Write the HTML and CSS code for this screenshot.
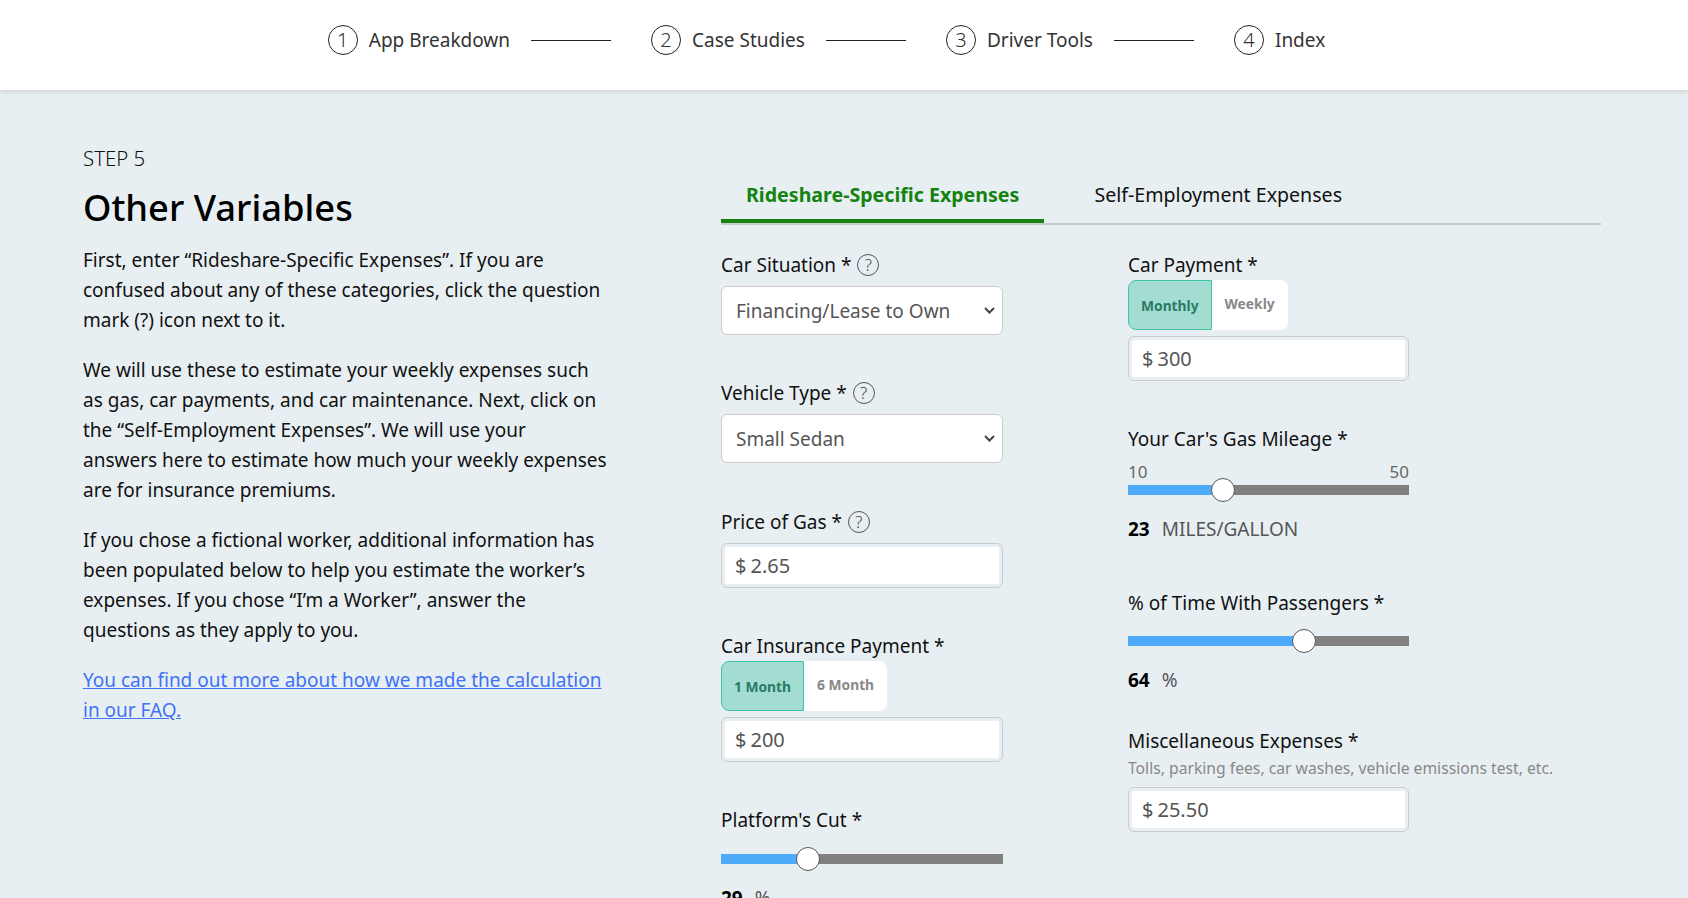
FILE: index.html
```html
<!DOCTYPE html>
<html lang="en">
<head>
    <meta charset="UTF-8">
    <meta name="viewport" content="width=device-width, initial-scale=1.0">
    <title>Other Variables</title>
    <link rel="stylesheet" href="styles.css">
</head>
<body>

    <nav class="steps">
        <div class="step"><span class="step-num">1</span><span class="step-label">App Breakdown</span></div>
        <span class="step-line"></span>
        <div class="step"><span class="step-num">2</span><span class="step-label">Case Studies</span></div>
        <span class="step-line"></span>
        <div class="step"><span class="step-num">3</span><span class="step-label">Driver Tools</span></div>
        <span class="step-line"></span>
        <div class="step"><span class="step-num">4</span><span class="step-label">Index</span></div>
    </nav>

    <main class="page">
        <section class="intro">
            <div class="eyebrow">STEP 5</div>
            <h1>Other Variables</h1>
            <p>First, enter “Rideshare-Specific Expenses”. If you are confused about any of these categories, click the question mark (?) icon next to it.</p>
            <p>We will use these to estimate your weekly expenses such as gas, car payments, and car maintenance. Next, click on the “Self-Employment Expenses”. We will use your<br>answers here to estimate how much your weekly expenses are for insurance premiums.</p>
            <p>If you chose a fictional worker, additional information has been populated below to help you estimate the worker’s expenses. If you chose “I’m a Worker”, answer the questions as they apply to you.</p>
            <p><a href="#">You can find out more about how we made the calculation in our FAQ.</a></p>
        </section>

        <section class="calc">
            <div class="tabs">
                <div class="tab active">Rideshare-Specific Expenses</div>
                <div class="tab">Self-Employment Expenses</div>
            </div>

            <div class="form-cols">
                <div class="form-col">
                    <div class="field field-snug">
                        <label>Car Situation * <span class="help">?</span></label>
                        <select><option>Financing/Lease to Own</option></select>
                    </div>
                    <div class="field">
                        <label>Vehicle Type * <span class="help">?</span></label>
                        <select><option>Small Sedan</option></select>
                    </div>
                    <div class="field field-snug">
                        <label>Price of Gas * <span class="help">?</span></label>
                        <div class="money"><span>$</span><span>2.65</span></div>
                    </div>
                    <div class="field field-snug">
                        <label>Car Insurance Payment *</label>
                        <div class="toggle">
                            <button class="on">1 Month</button>
                            <button>6 Month</button>
                        </div>
                        <div class="money"><span>$</span><span>200</span></div>
                    </div>
                    <div class="field">
                        <label>Platform's Cut *</label>
                        <div class="slider"><div class="slider-fill" style="width: 30.9%"><span class="thumb"></span></div></div>
                        <div class="slider-value"><b>29</b><span>%</span></div>
                    </div>
                </div>

                <div class="form-col">
                    <div class="field field-snug">
                        <label>Car Payment *</label>
                        <div class="toggle">
                            <button class="on">Monthly</button>
                            <button>Weekly</button>
                        </div>
                        <div class="money"><span>$</span><span>300</span></div>
                    </div>
                    <div class="field">
                        <label>Your Car's Gas Mileage *</label>
                        <div class="range-ends"><span>10</span><span>50</span></div>
                        <div class="slider slider-ranged"><div class="slider-fill" style="width: 33.8%"><span class="thumb"></span></div></div>
                        <div class="slider-value"><b>23</b><span>MILES/GALLON</span></div>
                    </div>
                    <div class="field field-tight">
                        <label>% of Time With Passengers *</label>
                        <div class="slider"><div class="slider-fill" style="width: 62.6%"><span class="thumb"></span></div></div>
                        <div class="slider-value"><b>64</b><span>%</span></div>
                    </div>
                    <div class="field">
                        <label>Miscellaneous Expenses *</label>
                        <div class="hint">Tolls, parking fees, car washes, vehicle emissions test, etc.</div>
                        <div class="money"><span>$</span><span>25.50</span></div>
                    </div>
                </div>
            </div>
        </section>
    </main>

</body>
</html>
```

FILE: styles.css
```css
html, body {
    height: 100%;
    overflow: hidden;
}

body {
    font-family: 'Noto Sans', sans-serif;
    font-size: 19px;
    line-height: 30px;
    margin: 0;
    padding: 0;
    color: #111;
    background-color: #e8eff3;
}

.steps {
    height: 80px;
    display: flex;
    align-items: center;
    justify-content: center;
    padding: 0 35px 10px 0;
    background-color: #fff;
    box-shadow: 0 2px 5px rgba(0, 0, 0, 0.12);
    position: relative;
}

.step {
    display: flex;
    align-items: center;
    gap: 11px;
    color: #333;
}

.step-num {
    width: 28px;
    height: 28px;
    border: 1px solid #222;
    border-radius: 50%;
    display: flex;
    align-items: center;
    justify-content: center;
    font-size: 20px;
    font-weight: 300;
}

.step-line {
    width: 80px;
    height: 1px;
    margin: 0 40px 0 21px;
    background-color: #222;
}

.page {
    display: flex;
    padding: 53px 87px 0 83px;
}

.intro {
    width: 528px;
    margin-right: 110px;
    flex-shrink: 0;
}

.eyebrow {
    font-size: 20.4px;
    font-weight: 300;
}

h1 {
    font-size: 36.3px;
    line-height: 46px;
    font-weight: 500;
    color: #000;
    margin: 11px 0 15px;
}

p {
    margin: 0 0 20px;
}

a {
    display: inline-block;
    max-width: 524px;
    color: #3f72f5;
}

.calc {
    flex: 1;
    margin-top: 37px;
}

.tabs {
    display: flex;
    gap: 25px;
    border-bottom: 2px solid #ccc;
    height: 43px;
    font-size: 19.6px;
}

.tab {
    padding: 0 25px;
    height: 43px;
    box-sizing: border-box;
}

.tab.active {
    color: #14830f;
    font-weight: 700;
    border-bottom: 4px solid #14830f;
}

.form-cols {
    display: flex;
    gap: 125px;
    margin-top: 25px;
}

.form-col {
    width: 282px;
}

.form-col + .form-col {
    width: 281px;
}

.field {
    margin-bottom: 44px;
}

.field-snug {
    margin-bottom: 43px;
}

.field-tight {
    margin-bottom: 31px;
}

.field-tight .slider {
    margin-top: 18px;
}

label {
    display: flex;
    align-items: center;
    gap: 1px;
    height: 30px;
    white-space: pre;
}

.help {
    width: 20px;
    height: 20px;
    border: 1px solid #555;
    border-radius: 50%;
    display: flex;
    align-items: center;
    justify-content: center;
    font-size: 17px;
    font-weight: 300;
    color: #444;
}

select {
    display: block;
    width: 100%;
    height: 49px;
    margin-top: 6px;
    padding: 0 24px 0 14px;
    font-family: inherit;
    font-size: 19px;
    color: #555;
    appearance: none;
    background: #fff url("data:image/svg+xml,%3Csvg xmlns='http://www.w3.org/2000/svg' width='11' height='7'%3E%3Cpath d='M1 1l4.5 4.5L10 1' fill='none' stroke='%23444' stroke-width='2'/%3E%3C/svg%3E") no-repeat right 7px center;
    border: 1px solid #ccc;
    border-radius: 6px;
}

.money {
    height: 37px;
    margin-top: 6px;
    padding: 3px;
    display: flex;
    align-items: center;
    gap: 4px;
    font-size: 20px;
    border: 1px solid #ccc;
    border-radius: 6px;
    color: #555;
    background-color: #fff;
    background-clip: content-box;
}

.money span:first-child {
    margin-left: 10px;
}

.toggle {
    display: flex;
    width: max-content;
    height: 50px;
    background-color: #fff;
    border-radius: 8px;
}

.toggle button {
    font-family: inherit;
    font-size: 13.8px;
    font-weight: 700;
    color: #888;
    background: none;
    border: 0;
    padding: 0 13px 3px;
}

.toggle button.on {
    color: #2a7a68;
    background-color: #a3ddd1;
    border: 1px solid #3fc3a5;
    border-radius: 8px 0 0 8px;
    padding: 0 12px;
}

.slider {
    height: 10px;
    margin-top: 19px;
    background-color: #808080;
}

.slider-ranged {
    margin-top: 3px;
}

.slider-fill {
    height: 100%;
    background-color: #4dabfa;
    position: relative;
}

.thumb {
    position: absolute;
    right: -12px;
    top: -7px;
    width: 22px;
    height: 22px;
    background-color: #fff;
    border: 1px solid #555;
    border-radius: 50%;
}

.slider-value {
    margin-top: 19px;
    color: #555;
}

.slider-value b {
    color: #000;
    margin-right: 12px;
}

.range-ends {
    display: flex;
    justify-content: space-between;
    margin-top: 8px;
    font-size: 17px;
    line-height: 20px;
    color: #666;
}

.hint {
    font-size: 15.7px;
    line-height: 20px;
    margin-top: 2px;
    white-space: nowrap;
    color: #888;
}

.hint + .money {
    margin-top: 9px;
}
```
